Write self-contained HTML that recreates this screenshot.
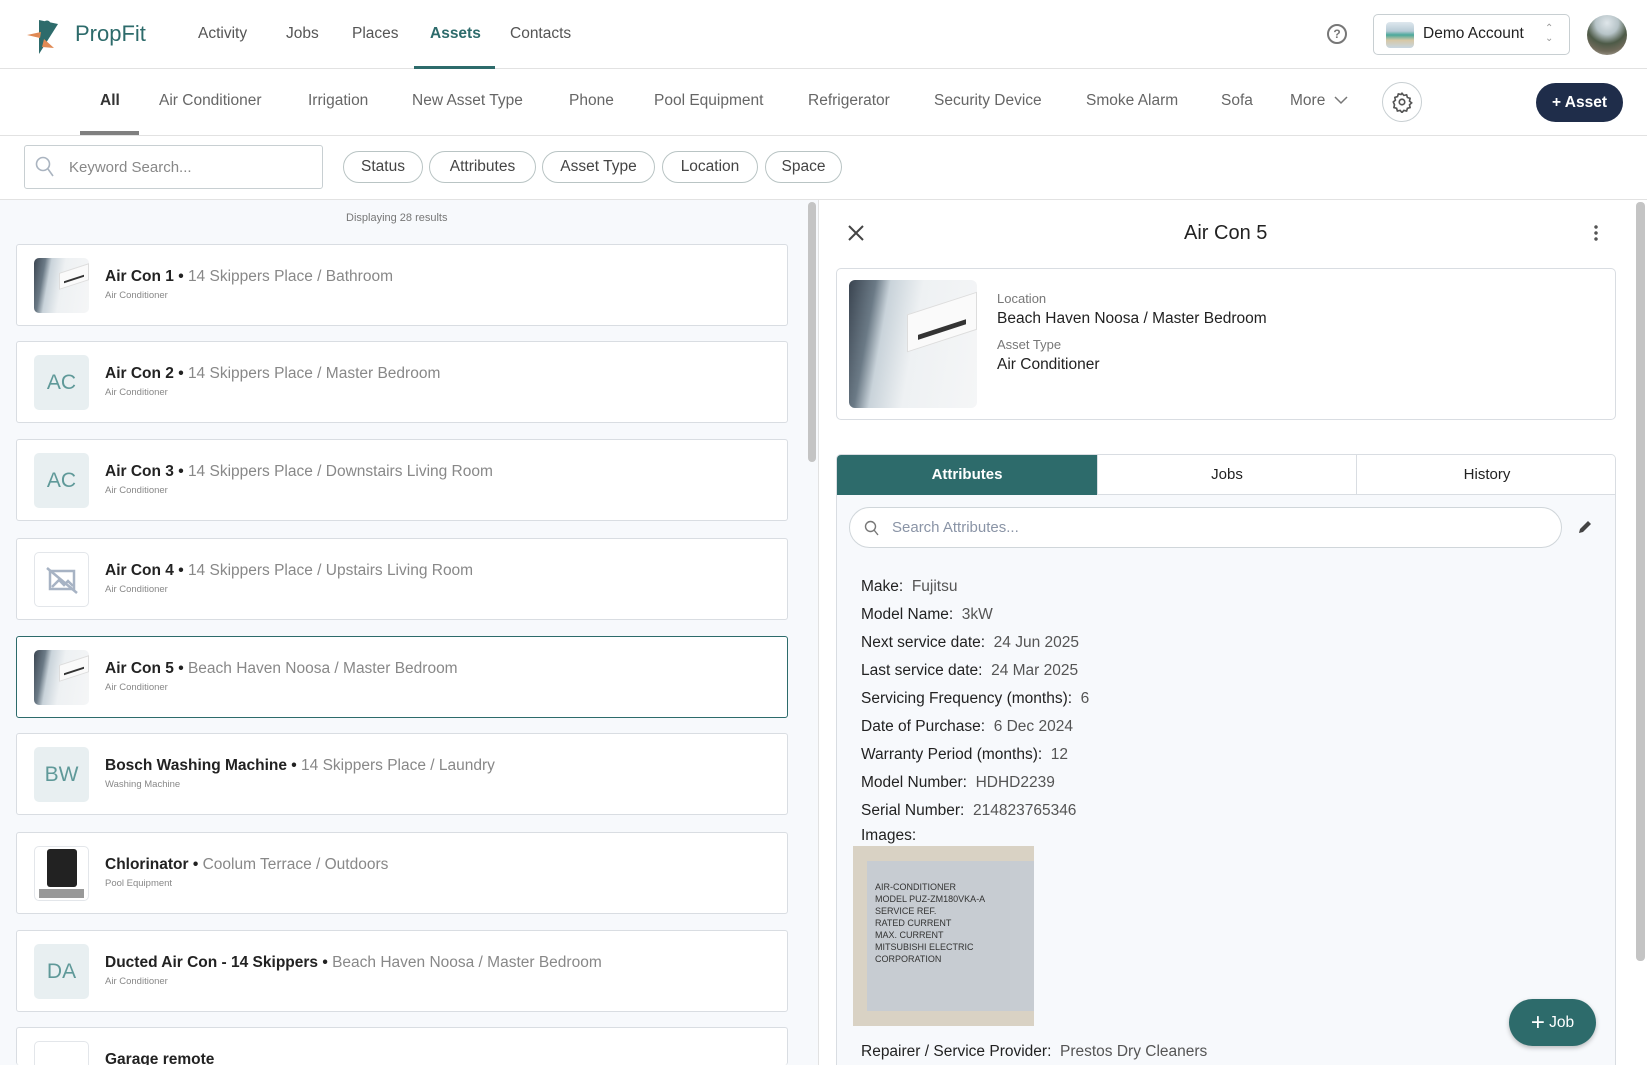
<!DOCTYPE html>
<html style="width:1647px;height:1065px;overflow:hidden"><head><meta charset="utf-8">
<style>
*{box-sizing:border-box;margin:0;padding:0}
body{width:1647px;height:1065px;overflow:hidden;background:#fff;font-family:"Liberation Sans",sans-serif;color:#222;position:relative}
.a{position:absolute;white-space:nowrap}
.nav{font-size:15.5px;color:#555;top:25px}
.tab{font-size:15.5px;color:#666;top:92px}
.chip{position:absolute;top:151px;height:32px;border:1px solid #b9c4c4;border-radius:16px;font-size:15.5px;color:#444;text-align:center;line-height:30px}
.card{position:absolute;left:16px;width:772px;height:82px;background:#fff;border:1px solid #d9dde2;border-radius:3px}
.card .th{position:absolute;left:17px;top:13px;width:55px;height:55px;border-radius:5px;background:#e8eff1;color:#5f9999;font-size:21px;text-align:center;line-height:55px;overflow:hidden}
.card .t{position:absolute;left:88px;top:23px;font-size:15.5px;white-space:nowrap;color:#222;font-weight:bold}
.card .t span{font-weight:normal;color:#888}
.card .s{position:absolute;left:88px;top:45px;font-size:9.5px;color:#888}
.acimg,.card .th.acimg{background:linear-gradient(100deg,#3a4450 0%,#6b7a86 18%,#c9d3da 28%,#eef1f3 50%,#f5f6f7 100%)}
.acunit{position:absolute;right:0;top:18%;width:55%;height:30%;background:#fafafa;border:1px solid #ddd;transform:skewY(-18deg)}
.acunit:after{content:"";position:absolute;left:15%;bottom:22%;width:70%;height:14%;background:#333}
.attr{position:absolute;left:861px;font-size:15.5px;color:#222}
.attr span{color:#555}
</style></head><body>
<div class="a" style="left:0;top:68px;width:1647px;height:1px;background:#e2e2e2"></div>
<svg class="a" style="left:24px;top:16px" width="40" height="40" viewBox="0 0 40 40">
<polygon points="15,4 15,38 34,8" fill="#2d6b6b"/>
<circle cx="23" cy="8" r="3.5" fill="#2d6b6b"/>
<polygon points="3,19 17,16 16,22" fill="#e08a55"/>
<polygon points="20,23 30,32 18,31" fill="#e08a55"/>
</svg>
<div class="a" style="left:75px;top:21px;font-size:22px;color:#2d6b6b">PropFit</div>
<div class="a nav" style="left:198px">Activity</div>
<div class="a nav" style="left:286px">Jobs</div>
<div class="a nav" style="left:352px">Places</div>
<div class="a nav" style="left:430px;color:#2d6b6b;font-weight:bold">Assets</div>
<div class="a nav" style="left:510px">Contacts</div>
<div class="a" style="left:414px;top:66px;width:81px;height:3px;background:#2d6b6b"></div>
<div class="a" style="left:1327px;top:24px;width:20px;height:20px;border:2px solid #777;border-radius:50%;font-size:12px;color:#777;text-align:center;line-height:16px;font-weight:bold">?</div>
<div class="a" style="left:1373px;top:14px;width:197px;height:41px;border:1px solid #c8cfd2;border-radius:5px"></div>
<div class="a" style="left:1386px;top:22px;width:28px;height:26px;border-radius:4px;background:linear-gradient(#dfe8ee 0,#b8cbd6 35%,#4aa89a 50%,#d7c8a6 70%,#c7d6e2 100%)"></div>
<div class="a" style="left:1423px;top:25px;font-size:15.5px;color:#222">Demo Account</div>
<div class="a" style="left:1545px;top:24px;font-size:10px;color:#999;line-height:10px">⌃<br>⌄</div>
<div class="a" style="left:1587px;top:15px;width:40px;height:40px;border-radius:50%;background:radial-gradient(circle at 50% 20%,#dfe6ea 0,#b7c4c8 30%,#4d5a47 55%,#6f6a5a 75%,#c1bcb0 100%)"></div>
<div class="a" style="left:0;top:135px;width:1647px;height:1px;background:#e2e2e2"></div>
<div class="a tab" style="left:100px;color:#333;font-weight:bold">All</div>
<div class="a" style="left:80px;top:131px;width:59px;height:4px;background:#808080"></div>
<div class="a tab" style="left:159px">Air Conditioner</div>
<div class="a tab" style="left:308px">Irrigation</div>
<div class="a tab" style="left:412px">New Asset Type</div>
<div class="a tab" style="left:569px">Phone</div>
<div class="a tab" style="left:654px">Pool Equipment</div>
<div class="a tab" style="left:808px">Refrigerator</div>
<div class="a tab" style="left:934px">Security Device</div>
<div class="a tab" style="left:1086px">Smoke Alarm</div>
<div class="a tab" style="left:1221px">Sofa</div>
<div class="a tab" style="left:1290px">More</div>
<svg class="a" style="left:1334px;top:96px" width="14" height="9"><polyline points="1,1 7,7 13,1" fill="none" stroke="#777" stroke-width="1.5"/></svg>
<div class="a" style="left:1382px;top:82px;width:40px;height:40px;border:1px solid #c8cfd2;border-radius:50%"></div>
<svg class="a" style="left:1391px;top:91px" width="22" height="22" viewBox="0 0 24 24" fill="none" stroke="#555" stroke-width="1.8"><circle cx="12" cy="12" r="3"/><path d="M12 2.5l2 2.3 3-.6.9 2.9 2.9.9-.6 3 2.3 2-2.3 2 .6 3-2.9.9-.9 2.9-3-.6-2 2.3-2-2.3-3 .6-.9-2.9-2.9-.9.6-3L2.5 12l2.3-2-.6-3 2.9-.9.9-2.9 3 .6z"/></svg>
<div class="a" style="left:1536px;top:83px;width:87px;height:39px;border-radius:20px;background:#1f2d4a;color:#fff;font-weight:bold;font-size:15.5px;text-align:center;line-height:39px">+ Asset</div>
<div class="a" style="left:0;top:199px;width:1647px;height:1px;background:#e2e2e2"></div>
<div class="a" style="left:24px;top:145px;width:299px;height:44px;border:1px solid #c8cfd2;border-radius:3px"></div>
<svg class="a" style="left:35px;top:156px" width="20" height="22"><circle cx="8" cy="8" r="6.5" fill="none" stroke="#aab4c0" stroke-width="1.6"/><line x1="13" y1="13" x2="18" y2="20" stroke="#aab4c0" stroke-width="1.6"/></svg>
<div class="a" style="left:69px;top:159px;font-size:15px;color:#888">Keyword Search...</div>
<div class="chip" style="left:343px;width:80px">Status</div>
<div class="chip" style="left:429px;width:107px">Attributes</div>
<div class="chip" style="left:542px;width:113px">Asset Type</div>
<div class="chip" style="left:662px;width:96px">Location</div>
<div class="chip" style="left:765px;width:77px">Space</div>
<div class="a" style="left:0;top:200px;width:818px;height:865px;background:#f7f9fc"></div>
<div class="a" style="left:808px;top:202px;width:8px;height:260px;background:#c4c4c4;border-radius:4px"></div>
<div class="a" style="left:818px;top:200px;width:1px;height:865px;background:#e2e2e2"></div>
<div class="a" style="left:346px;top:212px;font-size:11px;color:#777">Displaying 28 results</div>

<div class="card" style="top:244px"><div class="th acimg"><div class="acunit"></div></div><div class="t">Air Con 1 &bull; <span>14 Skippers Place / Bathroom</span></div><div class="s">Air Conditioner</div></div>
<div class="card" style="top:341px"><div class="th">AC</div><div class="t">Air Con 2 &bull; <span>14 Skippers Place / Master Bedroom</span></div><div class="s">Air Conditioner</div></div>
<div class="card" style="top:439px"><div class="th">AC</div><div class="t">Air Con 3 &bull; <span>14 Skippers Place / Downstairs Living Room</span></div><div class="s">Air Conditioner</div></div>
<div class="card" style="top:538px"><div class="th" style="background:#fff;border:1px solid #e3e6ea"><svg width="53" height="53" viewBox="0 0 53 53" style="position:absolute;left:0;top:0"><rect x="15" y="18" width="24" height="18" fill="none" stroke="#a7b3c4" stroke-width="2.5"/><path d="M17 34l7-7 5 5 4-4 5 5" fill="none" stroke="#a7b3c4" stroke-width="2.5"/><line x1="12" y1="15" x2="42" y2="40" stroke="#a7b3c4" stroke-width="2.5"/></svg></div><div class="t">Air Con 4 &bull; <span>14 Skippers Place / Upstairs Living Room</span></div><div class="s">Air Conditioner</div></div>
<div class="card" style="top:636px;border-color:#2d6b6b"><div class="th acimg"><div class="acunit"></div></div><div class="t">Air Con 5 &bull; <span>Beach Haven Noosa / Master Bedroom</span></div><div class="s">Air Conditioner</div></div>
<div class="card" style="top:733px"><div class="th">BW</div><div class="t">Bosch Washing Machine &bull; <span>14 Skippers Place / Laundry</span></div><div class="s">Washing Machine</div></div>
<div class="card" style="top:832px"><div class="th" style="background:#fff;border:1px solid #e3e6ea"><div style="position:absolute;left:12px;top:2px;width:30px;height:38px;background:#222;border-radius:3px"></div><div style="position:absolute;left:4px;top:42px;width:45px;height:9px;background:#999"></div></div><div class="t">Chlorinator &bull; <span>Coolum Terrace / Outdoors</span></div><div class="s">Pool Equipment</div></div>
<div class="card" style="top:930px"><div class="th">DA</div><div class="t">Ducted Air Con - 14 Skippers &bull; <span>Beach Haven Noosa / Master Bedroom</span></div><div class="s">Air Conditioner</div></div>
<div class="card" style="top:1027px;height:38px;border-bottom:none"><div class="th" style="background:#fff;border:1px solid #e3e6ea"></div><div class="t">Garage remote</div></div>

<div class="a" style="left:1636px;top:202px;width:9px;height:759px;background:#c4c4c4;border-radius:4px"></div>
<svg class="a" style="left:848px;top:225px" width="16" height="16"><path d="M1 1L15 15M15 1L1 15" stroke="#444" stroke-width="2"/></svg>
<div class="a" style="left:1184px;top:222px;font-size:20px;color:#222">Air Con 5</div>
<div class="a" style="left:1594px;top:224px;width:4px;height:18px;background:radial-gradient(circle,#555 1.5px,transparent 2px) 0 0/4px 6px"></div>
<div class="a" style="left:836px;top:268px;width:780px;height:152px;border:1px solid #d9dde2;border-radius:5px"></div>
<div class="a acimg" style="left:849px;top:280px;width:128px;height:128px;border-radius:6px;overflow:hidden"><div class="acunit"></div></div>
<div class="a" style="left:997px;top:291px;font-size:13px;color:#777">Location</div>
<div class="a" style="left:997px;top:310px;font-size:15.5px;color:#222">Beach Haven Noosa / Master Bedroom</div>
<div class="a" style="left:997px;top:337px;font-size:13px;color:#777">Asset Type</div>
<div class="a" style="left:997px;top:356px;font-size:15.5px;color:#222">Air Conditioner</div>

<div class="a" style="left:836px;top:454px;width:780px;height:611px;border:1px solid #d9dde2;border-bottom:none;border-radius:5px 5px 0 0;background:#f7f9fc;overflow:hidden">
 <div style="position:absolute;left:0;top:0;width:260px;height:40px;background:#2d6b6b;color:#fff;font-weight:bold;font-size:15px;text-align:center;line-height:40px">Attributes</div>
 <div style="position:absolute;left:260px;top:0;width:259px;height:40px;background:#fff;border-left:1px solid #d9dde2;border-bottom:1px solid #d9dde2;font-size:15px;text-align:center;line-height:40px">Jobs</div>
 <div style="position:absolute;left:519px;top:0;width:261px;height:40px;background:#fff;border-left:1px solid #d9dde2;border-bottom:1px solid #d9dde2;font-size:15px;text-align:center;line-height:40px">History</div>
</div>
<div class="a" style="left:849px;top:507px;width:713px;height:41px;border:1px solid #d0d6da;border-radius:21px;background:#fff"></div>
<svg class="a" style="left:864px;top:520px" width="16" height="17"><circle cx="6.5" cy="6.5" r="5" fill="none" stroke="#777" stroke-width="1.4"/><line x1="10" y1="10" x2="14" y2="15" stroke="#777" stroke-width="1.4"/></svg>
<div class="a" style="left:892px;top:519px;font-size:15px;color:#8a94a6">Search Attributes...</div>
<svg class="a" style="left:1577px;top:519px" width="16" height="16"><path d="M2 14l1-4 8-8 3 3-8 8z" fill="#444"/></svg>

<div class="attr" style="top:578px">Make:&nbsp; <span>Fujitsu</span></div>
<div class="attr" style="top:606px">Model Name:&nbsp; <span>3kW</span></div>
<div class="attr" style="top:634px">Next service date:&nbsp; <span>24 Jun 2025</span></div>
<div class="attr" style="top:662px">Last service date:&nbsp; <span>24 Mar 2025</span></div>
<div class="attr" style="top:690px">Servicing Frequency (months):&nbsp; <span>6</span></div>
<div class="attr" style="top:718px">Date of Purchase:&nbsp; <span>6 Dec 2024</span></div>
<div class="attr" style="top:746px">Warranty Period (months):&nbsp; <span>12</span></div>
<div class="attr" style="top:774px">Model Number:&nbsp; <span>HDHD2239</span></div>
<div class="attr" style="top:802px">Serial Number:&nbsp; <span>214823765346</span></div>
<div class="attr" style="top:827px">Images:</div>
<div class="a" style="left:853px;top:846px;width:181px;height:180px;background:#d9d2c4">
 <div style="position:absolute;left:14px;top:15px;width:167px;height:150px;background:#c7ccd2;font-size:9px;color:#333;padding:20px 8px;line-height:12px;white-space:normal">AIR-CONDITIONER<br>MODEL PUZ-ZM180VKA-A<br>SERVICE REF.<br>RATED CURRENT<br>MAX. CURRENT<br>MITSUBISHI ELECTRIC CORPORATION</div>
</div>
<div class="attr" style="top:1043px">Repairer / Service Provider:&nbsp; <span>Prestos Dry Cleaners</span></div>
<div class="a" style="left:1509px;top:999px;width:87px;height:47px;border-radius:24px;background:#2d6b6b;color:#fff;font-size:15.5px;line-height:47px;text-align:center;box-shadow:0 2px 5px rgba(0,0,0,.25)"><span style="font-size:24px;vertical-align:-3px">+</span> Job</div>
</body></html>
